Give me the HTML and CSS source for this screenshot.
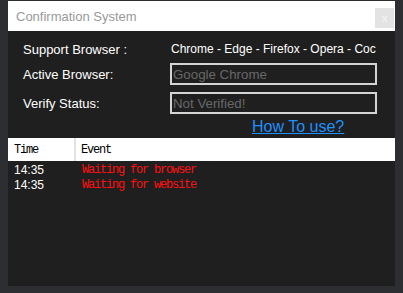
FILE: index.html
```html
<!DOCTYPE html>
<html lang="en">
<head>
    <meta charset="UTF-8">
    <meta name="viewport" content="width=device-width, initial-scale=1.0">
    <title>Confirmation System</title>
    <link rel="stylesheet" href="styles.css">
</head>
<body>
    <div class="window">
        <div class="titlebar">
            <span class="title">Confirmation System</span>
            <span class="close">x</span>
        </div>

        <div class="form">
            <div class="row row-support">
                <span class="label">Support Browser :</span>
                <span class="browsers">Chrome - Edge - Firefox - Opera - Coc Coc</span>
            </div>
            <div class="row">
                <span class="label">Active Browser:</span>
                <input type="text" class="field" placeholder="Google Chrome" readonly>
            </div>
            <div class="row">
                <span class="label">Verify Status:</span>
                <input type="text" class="field" placeholder="Not Verified!" readonly>
            </div>
            <div class="help">
                <a href="#">How To use?</a>
            </div>
        </div>

        <table class="log">
            <thead>
                <tr>
                    <th class="col-time">Time</th>
                    <th>Event</th>
                </tr>
            </thead>
            <tbody>
                <tr>
                    <td class="time">14:35</td>
                    <td class="event">Waiting for browser</td>
                </tr>
                <tr>
                    <td class="time">14:35</td>
                    <td class="event">Waiting for website</td>
                </tr>
            </tbody>
        </table>
    </div>
</body>
</html>
```

FILE: styles.css
```css
body {
    margin: 0;
    width: 403px;
    height: 293px;
    overflow: hidden;
    background-color: #2d2e32;
    font-family: "Liberation Sans", Arial, sans-serif;
}
.window {
    margin: 1px 0 0 8px;
    width: 387px;
    height: 285px;
    background: #1f1f1f;
    display: flex;
    flex-direction: column;
}
.titlebar {
    height: 30px;
    background: white;
    display: flex;
    justify-content: space-between;
    align-items: flex-start;
    flex-shrink: 0;
}
.title {
    margin: 8px 0 0 8px;
    font-size: 13px;
    color: #999;
}
.close {
    margin: 7px 1px 0 0;
    width: 19px;
    height: 20px;
    background: #e3e3e3;
    color: #f2f2f2;
    font-size: 11px;
    font-weight: bold;
    display: flex;
    align-items: center;
    justify-content: center;
}
.form {
    padding: 7px 15px 0 15px;
}
.row {
    display: flex;
    align-items: center;
    height: 22px;
    margin-bottom: 7px;
}
.row-support {
    margin-bottom: 3px;
}
.label {
    width: 147px;
    flex-shrink: 0;
    font-size: 13px;
    color: white;
}
.browsers {
    width: 206px;
    padding-left: 1px;
    font-size: 12px;
    color: white;
    white-space: nowrap;
    overflow: hidden;
}
.field {
    box-sizing: border-box;
    width: 207px;
    height: 22px;
    margin: 0;
    padding: 0 0 0 1px;
    border: 2px solid #d4d4d4;
    background: transparent;
    font-family: "Liberation Sans", Arial, sans-serif;
    font-size: 13.3px;
    outline: none;
}
.field::placeholder {
    color: #686868;
}
.help {
    height: 20px;
    padding-left: 229px;
    margin-top: -3px;
    line-height: 18px;
}
.help a {
    font-size: 16px;
    color: #1e90ff;
}
.log {
    width: 100%;
    border-collapse: collapse;
    font-family: "Liberation Mono", "Courier New", monospace;
}
.log th {
    height: 23px;
    padding: 0 0 0 5px;
    background: white;
    color: black;
    font-size: 12px;
    letter-spacing: -1.2px;
    font-weight: normal;
    text-align: left;
}
.log th.col-time {
    width: 60px;
    padding-left: 6px;
    border-right: 2px solid #e2e2e2;
}
.log tbody tr:first-child td {
    padding-top: 2px;
}
.log td {
    height: 15px;
    padding: 0 0 0 7px;
    line-height: 15px;
}
.log td.time {
    padding-left: 6px;
    font-family: "Liberation Sans", Arial, sans-serif;
    font-size: 12px;
    color: white;
}
.log td.event {
    font-size: 12px;
    letter-spacing: -1.2px;
    color: #ff1010;
}
```
